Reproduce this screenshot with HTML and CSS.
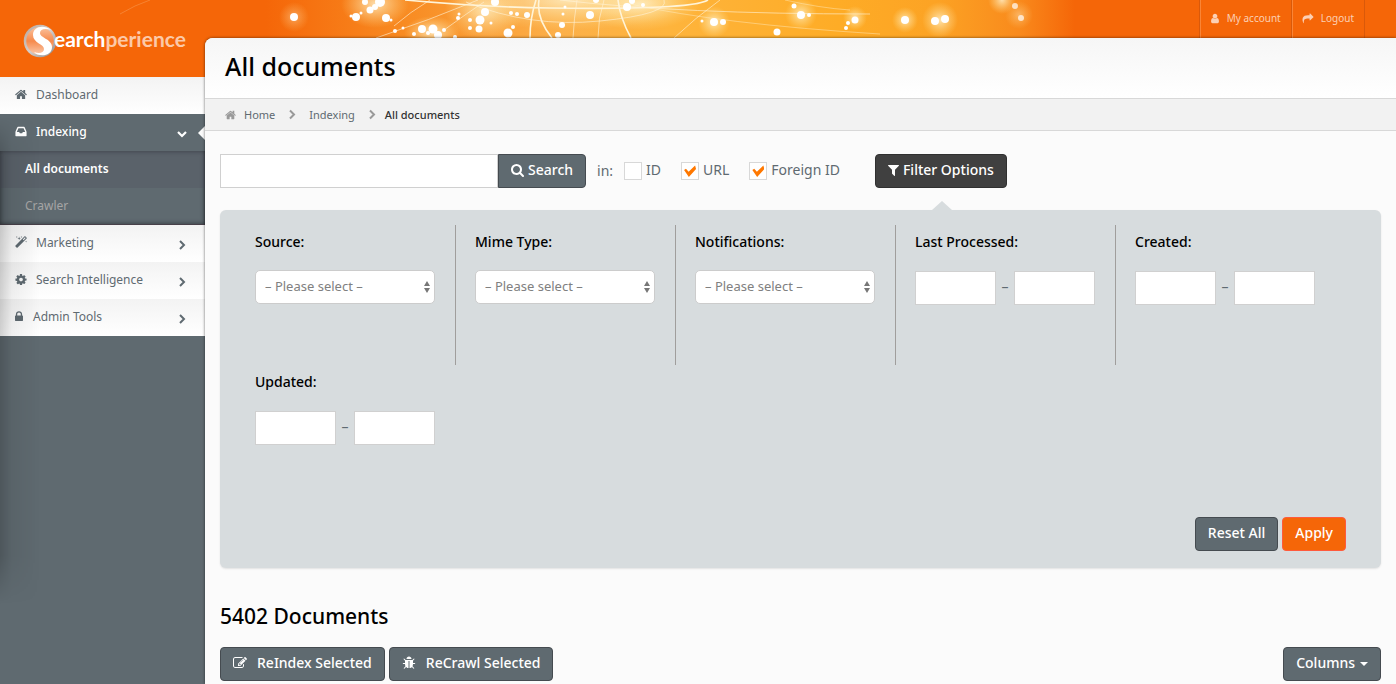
FILE: index.html
```html
<!DOCTYPE html>
<html lang="en">
<head>
<meta charset="utf-8">
<title>All documents</title>
<link rel="stylesheet" href="styles.css">
</head>
<body>
<svg width="0" height="0" class="sprite" aria-hidden="true">
  <symbol id="home" viewBox="0 0 1664 1792"><path d="M1408 992v480q0 26-19 45t-45 19H960v-384H704v384H320q-26 0-45-19t-19-45V992q0-1 .5-3t.5-3l575-474 575 474q1 2 1 6zm223-69l-62 74q-8 9-21 11h-3q-13 0-21-7L832 424 140 1001q-12 8-24 7-13-2-21-11l-62-74q-8-10-7-23.500T37 878l719-599q32-26 76-26t76 26l244 204V288q0-14 9-23t23-9h192q14 0 23 9t9 23v408l219 182q10 8 11 21.500t-7 23.500z"/></symbol>
  <symbol id="inbox" viewBox="0 0 1536 1792"><path d="M1023 960h316q-1-3-2.500-8.500t-2.500-7.500L1122 448H414L202 944q-1 3-2.500 8.500T197 960h316l95 192h320zm513 30v482q0 26-19 45t-45 19H64q-26 0-45-19t-19-45V990q0-62 25-123l238-552q10-25 36.500-42t52.500-17h832q26 0 52.500 17t36.500 42l238 552q25 61 25 123z"/></symbol>
  <symbol id="magic" viewBox="0 0 1664 1792"><path d="M1190 581l293-293-107-107-293 293zM1637 288q0 27-18 45L333 1619q-18 18-45 18t-45-18L45 1421q-18-18-18-45t18-45L1331 45q18-18 45-18t45 18l198 198q18 18 18 45zM286 98l98 30-98 30-30 98-30-98-98-30 98-30 30-98zM636 260l196 60-196 60-60 196-60-196-196-60 196-60 60-196zM1566 738l98 30-98 30-30 98-30-98-98-30 98-30 30-98zM926 98l98 30-98 30-30 98-30-98-98-30 98-30 30-98z"/></symbol>
  <symbol id="cog" viewBox="0 0 1536 1792"><path d="M1024 896q0-106-75-181t-181-75-181 75-75 181 75 181 181 75 181-75 75-181zm512-109v222q0 12-8 23t-20 13l-185 28q-19 54-39 91 35 50 107 138 10 12 10 25t-9 23q-27 37-99 108t-94 71q-12 0-26-9l-138-108q-44 23-91 38-16 136-29 186-7 28-36 28H657q-14 0-24.500-8.500T621 1658l-28-184q-49-16-90-37l-141 107q-10 9-25 9-14 0-25-11-126-114-165-168-7-10-7-23 0-12 8-23 15-21 51-66.500t54-70.500q-27-50-41-99L29 1064q-13-2-21-12.500T0 1028V806q0-12 8-23t19-13l186-28q14-46 39-92-40-57-107-138-10-12-10-24 0-10 9-23 26-36 98.500-107.500T337 286q13 0 26 10l138 107q44-23 91-38 16-136 29-186 7-28 36-28h222q14 0 24.500 8.500T915 180l28 184q49 16 90 37l142-107q9-9 24-9 13 0 25 10 129 119 165 170 7 8 7 22 0 12-8 23-15 21-51 66.500T1283 647q26 50 41 98l183 28q13 2 21 12.500t8 23.500z"/></symbol>
  <symbol id="lock" viewBox="0 0 1152 1792"><path d="M320 768h512V576q0-106-75-181t-181-75-181 75-75 181v192zm832 96v576q0 40-28 68t-68 28H96q-40 0-68-28t-28-68V864q0-40 28-68t68-28h32V576q0-184 132-316t316-132 316 132 132 316v192h32q40 0 68 28t28 68z"/></symbol>
  <symbol id="user" viewBox="0 0 1280 1792"><path d="M1280 1399q0 109-62.500 187t-150.500 78H213q-88 0-150.500-78T0 1399q0-85 8.500-160.500t31.500-152T98.500 955.500t94-89T327 832q131 128 313 128t313-128q76 0 134.500 34.500t94 89T1240 1086.500t31.500 152T1280 1399zM1024 512q0 159-112.500 271.500T640 896 368.500 783.500 256 512t112.500-271.500T640 128t271.500 112.500T1024 512z"/></symbol>
  <symbol id="share" viewBox="0 0 1792 1792"><path d="M1792 640q0 26-19 45l-512 512q-19 19-45 19t-45-19-19-45V896H928q-98 0-175.500 6t-154 21.500-133 42.500-105.500 69.500-80 101-48.500 138.500-17.500 181q0 55 5 123 0 6 2.500 23.500t2.500 26.500q0 15-8.500 25t-23.500 10q-16 0-28-17-7-9-13-22t-13.500-30-10.500-24Q0 1286 0 1120q0-199 53-333Q215 384 928 384h224V128q0-26 19-45t45-19 45 19l512 512q19 19 19 45z"/></symbol>
  <symbol id="search" viewBox="0 0 1664 1792"><path d="M1152 832q0-185-131.500-316.500T704 384 387.500 515.500 256 832t131.500 316.500T704 1280t316.500-131.500T1152 832zm512 832q0 52-38 90t-90 38q-54 0-90-38l-343-342q-179 124-399 124-143 0-273.500-55.500t-225-150-150-225T0 832t55.500-273.500 150-225 225-150T704 128t273.500 55.500 225 150 150 225T1408 832q0 220-124 399l343 343q37 37 37 90z"/></symbol>
  <symbol id="filter" viewBox="0 0 1408 1792"><path d="M1403 295q17 41-14 70L896 858v742q0 42-39 59-13 5-25 5-27 0-45-19l-256-256q-19-19-19-45V858L19 365q-31-29-14-70 17-39 59-39h1280q42 0 59 39z"/></symbol>
  <symbol id="edit" viewBox="0 0 1792 1792"><path d="M888 1184l116-116-152-152-116 116v56h96v96h56zm440-720q-16-16-33 1L945 815q-17 17-1 33t33-1l350-350q17-17 1-33zm80 594v190q0 119-84.500 203.500T1120 1536H288q-119 0-203.500-84.500T0 1248V416q0-119 84.500-203.500T288 128h832q63 0 117 25 15 7 18 23 3 17-9 29l-49 49q-14 14-32 8-23-6-45-6H288q-66 0-113 47t-47 113v832q0 66 47 113t113 47h832q66 0 113-47t47-113v-126q0-13 9-22l64-64q15-15 35-7t20 29zm-96-738l288 288-672 672H640V992zm444 132l-92 92-288-288 92-92q28-28 68-28t68 28l152 152q28 28 28 68t-28 68z"/></symbol>
  <symbol id="bug" viewBox="0 0 1792 1792"><path d="M1696 960q0 26-19 45t-45 19h-224q0 171-67 290l208 209q19 19 19 45t-19 45q-18 19-45 19t-45-19l-198-197q-5 5-15 13t-42 28.500-65 36.500-82 29-97 13V640H832v896q-51 0-101.500-13.500t-87-33-66-39-43.500-32.500l-15-14-183 207q-20 21-48 21-24 0-43-16-19-18-20.500-44.500t15.500-46.500l202-227q-58-114-58-274H160q-26 0-45-19t-19-45 19-45 45-19h224V602L211 429q-19-19-19-45t19-45 45-19 45 19l173 173h844l173-173q19-19 45-19t45 19 19 45-19 45l-173 173v294h224q26 0 45 19t19 45zm-480-576H576q0-133 93.500-226.500T896 64t226.500 93.500T1216 384z"/></symbol>
  <symbol id="right" viewBox="0 0 8 10"><path d="M2 1l4 4-4 4" fill="none" stroke="currentColor" stroke-width="2"/></symbol>
  <symbol id="down" viewBox="0 0 10 8"><path d="M1 2l4 4 4-4" fill="none" stroke="currentColor" stroke-width="2.200"/></symbol>
  <symbol id="updown" viewBox="0 0 6 12"><path d="M0 5l3-5 3 5zM0 7l3 5 3-5z"/></symbol>
</svg>

<div class="page">
  <svg class="sparkles" viewBox="0 0 1396 38" preserveAspectRatio="xMidYMin slice" aria-hidden="true">
    <defs>
      <linearGradient id="warm"><stop offset=".19" stop-color="#f56608"/><stop offset=".29" stop-color="#f88b22"/><stop offset=".4" stop-color="#fcb04a"/><stop offset=".48" stop-color="#feb43c"/><stop offset=".6" stop-color="#feac26"/><stop offset=".67" stop-color="#fca324"/><stop offset=".73" stop-color="#f98a1c"/><stop offset=".77" stop-color="#f56608"/></linearGradient>
      <radialGradient id="glow"><stop offset="0" stop-color="#fff3cf" stop-opacity=".8"/><stop offset="1" stop-color="#ffe090" stop-opacity="0"/></radialGradient>
    </defs>
    <rect width="1396" height="38" fill="url(#warm)"/>
    <g fill="url(#glow)">
      <ellipse cx="375" cy="4" rx="34" ry="24"/><ellipse cx="432" cy="32" rx="28" ry="16"/><ellipse cx="485" cy="10" rx="40" ry="30"/><ellipse cx="570" cy="0" rx="120" ry="30"/><ellipse cx="640" cy="4" rx="60" ry="26"/>
      <circle cx="294" cy="17" r="15" opacity=".5"/><circle cx="714" cy="22" r="16"/><circle cx="801" cy="14" r="16"/><circle cx="905" cy="20" r="13"/><circle cx="940" cy="20" r="18"/><circle cx="855" cy="18" r="12"/><circle cx="1002" cy="0" r="14"/><circle cx="1019" cy="15" r="14" opacity=".5"/>
    </g>
    <g fill="none" stroke="#fff4d8">
      <g stroke-width="1.600"><path d="M405 0Q480 7 550 8T660 7Q700 5 708 0"/><path d="M536 0Q530 18 530 38"/><path d="M539 0Q536 18 552 38"/><path d="M618 0Q620 18 631 38"/></g>
      <g stroke-opacity=".6"><path d="M376 38Q430 20 478 0"/><path d="M394 26Q410 12 430 0"/><path d="M444 30Q466 14 484 2"/><path d="M466 2Q530 28 600 21T664 0"/><path d="M577 0Q574 18 573 38"/><path d="M604 0Q598 18 598 38"/><path d="M674 38Q695 18 720 0"/><path d="M560 0Q680 14 870 14"/><path d="M630 4Q720 24 880 34" stroke-opacity=".4"/><path d="M785 0Q820 8 850 10" stroke-opacity=".4"/><path d="M120 14Q135 5 150 0" stroke-opacity=".2"/></g>
    </g>
    <g fill="#fff">
      <circle cx="294" cy="17" r="4"/><circle cx="356" cy="17" r="4"/><circle cx="351" cy="16" r="1.500"/><circle cx="361" cy="13" r="1.500"/><circle cx="365" cy="2" r="3"/><circle cx="370" cy="10" r="3.500"/><circle cx="375" cy="7" r="3"/><circle cx="380" cy="2" r="5"/><circle cx="386" cy="18" r="4"/><circle cx="391" cy="20" r="1.500"/><circle cx="395" cy="31" r="2"/><circle cx="403" cy="28" r="1.500"/><circle cx="414" cy="34" r="2"/><circle cx="422" cy="29" r="4"/><circle cx="433" cy="29" r="4.500"/><circle cx="428" cy="33" r="2"/><circle cx="438" cy="35" r="4"/><circle cx="444" cy="30" r="2"/><circle cx="455" cy="37" r="2"/><circle cx="458" cy="18" r="2"/><circle cx="459" cy="14" r="1.500"/><circle cx="470" cy="28" r="2"/><circle cx="470" cy="20" r="2"/><circle cx="479" cy="29" r="3.500"/><circle cx="480" cy="20" r="4.500"/><circle cx="485" cy="12" r="4"/><circle cx="495" cy="2" r="4"/><circle cx="491" cy="23" r="1.500"/><circle cx="508" cy="33" r="4.500"/><circle cx="513" cy="27" r="2"/><circle cx="511" cy="13" r="2"/><circle cx="517" cy="14" r="2"/><circle cx="527" cy="15" r="3"/><circle cx="558" cy="35" r="3"/><circle cx="562" cy="25" r="3"/><circle cx="563" cy="14" r="1.500"/><circle cx="565" cy="7" r="1.500"/><circle cx="590" cy="15" r="4"/><circle cx="596" cy="0" r="3"/><circle cx="627" cy="7" r="4"/><circle cx="632" cy="1" r="3"/><circle cx="643" cy="5" r="2"/><circle cx="702" cy="21" r="1.500"/><circle cx="714" cy="22" r="4"/><circle cx="723" cy="22" r="3"/><circle cx="777" cy="32" r="3.500"/><circle cx="794" cy="6" r="2.500"/><circle cx="801" cy="15" r="4"/><circle cx="809" cy="15" r="2"/><circle cx="846" cy="28" r="2"/><circle cx="848" cy="23" r="2"/><circle cx="855" cy="20" r="3.500"/><circle cx="905" cy="20" r="4"/><circle cx="935" cy="21" r="4"/><circle cx="945" cy="19" r="4"/><circle cx="1015" cy="6" r="3" opacity=".7"/><circle cx="1021" cy="18" r="3" opacity=".7"/>
    </g>
  </svg>

  <div class="side">
    <a class="logo" href="#" aria-label="Searchperience">
      <svg viewBox="0 0 34 34" aria-hidden="true">
        <defs><linearGradient id="lens" x2="0" y2="1"><stop offset="0" stop-color="#fbc7a6"/><stop offset=".5" stop-color="#f68a4c"/><stop offset="1" stop-color="#fbd0b4"/></linearGradient>
        <linearGradient id="rim" x2="1" y2="1"><stop offset="0" stop-color="#b9a79d"/><stop offset=".5" stop-color="#d5cfcb"/><stop offset="1" stop-color="#8f8a88"/></linearGradient></defs>
        <circle cx="17" cy="17" r="15" fill="url(#lens)" stroke="url(#rim)" stroke-width="2.500"/>
        <path d="M28 6C20 0 10 3 10 11c0 8 11 9 11 14 0 4-5 5-10 3 4 5 18 5 18-5 0-8-12-9-12-14 0-4 5-5 11-3z" fill="#fff"/>
      </svg>
      <span class="logo-text">earch<span class="logo-soft">perience</span></span>
    </a>
    <nav class="nav">
      <a class="item" href="#"><svg class="ic"><use href="#home"/></svg>Dashboard</a>
      <a class="item open" href="#"><svg class="ic"><use href="#inbox"/></svg>Indexing<svg class="chev"><use href="#down"/></svg></a>
      <div class="sub">
        <a class="subitem current" href="#">All documents</a>
        <a class="subitem" href="#">Crawler</a>
      </div>
      <a class="item" href="#"><svg class="ic"><use href="#magic"/></svg>Marketing<svg class="chev"><use href="#right"/></svg></a>
      <a class="item" href="#"><svg class="ic"><use href="#cog"/></svg>Search Intelligence<svg class="chev"><use href="#right"/></svg></a>
      <a class="item" href="#"><svg class="ic narrow"><use href="#lock"/></svg>Admin Tools<svg class="chev"><use href="#right"/></svg></a>
    </nav>
  </div>

  <div class="body">
    <div class="topbar">
      <a class="top-link" href="#"><svg class="user"><use href="#user"/></svg>My account</a>
      <a class="top-link" href="#"><svg><use href="#share"/></svg>Logout</a>
    </div>
    <main class="main">
      <h1 class="title">All documents</h1>
      <nav class="crumbs" aria-label="Breadcrumb">
        <a class="crumb" href="#"><svg class="crumb-home"><use href="#home"/></svg>Home</a>
        <svg class="sep"><use href="#right"/></svg>
        <a class="crumb" href="#">Indexing</a>
        <svg class="sep last"><use href="#right"/></svg>
        <span class="here">All documents</span>
      </nav>
      <div class="content">
        <form class="search">
          <input class="query" type="text" aria-label="Search documents">
          <button class="btn joined" type="button"><svg class="glyph"><use href="#search"/></svg>Search</button>
          <span class="in">in:</span>
          <label class="check"><input type="checkbox">ID</label>
          <label class="check"><input type="checkbox" checked>URL</label>
          <label class="check"><input type="checkbox" checked>Foreign ID</label>
          <button class="btn dark" type="button"><svg class="glyph funnel"><use href="#filter"/></svg>Filter Options</button>
        </form>
        <form class="panel">
          <div class="filters">
            <div class="cell"><label class="name" for="source">Source:</label><div class="pick"><select id="source"><option>– Please select –</option></select><svg><use href="#updown"/></svg></div></div>
            <div class="cell"><label class="name" for="mime">Mime Type:</label><div class="pick"><select id="mime"><option>– Please select –</option></select><svg><use href="#updown"/></svg></div></div>
            <div class="cell"><label class="name" for="notes">Notifications:</label><div class="pick"><select id="notes"><option>– Please select –</option></select><svg><use href="#updown"/></svg></div></div>
            <div class="cell"><label class="name" for="processed">Last Processed:</label><div class="range"><input id="processed" type="text"><span class="dash">–</span><input type="text" aria-label="Last processed until"></div></div>
            <div class="cell plain"><label class="name" for="created">Created:</label><div class="range"><input id="created" type="text"><span class="dash">–</span><input type="text" aria-label="Created until"></div></div>
            <div class="cell plain"><label class="name" for="updated">Updated:</label><div class="range"><input id="updated" type="text"><span class="dash">–</span><input type="text" aria-label="Updated until"></div></div>
          </div>
          <div class="actions">
            <button class="btn" type="reset">Reset All</button>
            <button class="btn orange" type="button">Apply</button>
          </div>
        </form>
        <h2 class="count">5402 Documents</h2>
        <div class="tools">
          <button class="btn" type="button"><svg class="glyph wide"><use href="#edit"/></svg>ReIndex Selected</button>
          <button class="btn" type="button"><svg class="glyph wide"><use href="#bug"/></svg>ReCrawl Selected</button>
          <button class="btn columns" type="button">Columns<span class="caret"></span></button>
        </div>
      </div>
    </main>
  </div>
</div>
</body>
</html>
```
FILE: styles.css
```css
* { box-sizing: border-box; }
body {
  margin: 0;
  font-family: "Noto Sans", "Open Sans", sans-serif;
  font-size: 14px;
  color: #5f6a71;
}
a { color: inherit; text-decoration: none; }
svg { fill: currentColor; flex: none; }
button, input, select { font: inherit; margin: 0; }
.sprite { position: absolute; }

.page {
  position: relative;
  display: grid;
  grid-template-columns: 205px 1fr;
  min-height: 100vh;
  background: #f56608;
}
.sparkles { position: absolute; top: 0; left: 0; width: 100%; height: 38px; }

.side { position: relative; display: flex; flex-direction: column; }
.logo { display: flex; align-items: center; height: 77px; padding: 4px 0 0 23px; }
.logo svg { width: 34px; height: 34px; }
.logo-text {
  font-family: Lato, sans-serif;
  font-weight: 700;
  font-size: 21px;
  line-height: 28px;
  color: #fff;
  margin: -4px 0 0 -3px;
}
.logo-soft { color: #fcc9a8; }
.nav {
  position: relative;
  flex: 1;
  background: #5f6a70;
  font-size: 12px;
}
.nav::after {
  content: "";
  position: absolute;
  left: 0;
  top: 40px;
  bottom: 80px;
  width: 40px;
  background: linear-gradient(90deg, rgba(0, 0, 0, .18), rgba(0, 0, 0, .06) 30%, transparent);
  mask-image: linear-gradient(transparent, #000 40px, #000 90%, transparent);
  pointer-events: none;
}
.item {
  position: relative;
  display: flex;
  align-items: center;
  height: 37px;
  padding: 0 18px 2px 15px;
  background: linear-gradient(#f3f3f3, #fff);
}
.ic { width: 12px; height: 13px; margin-right: 9px; }
.ic.narrow { width: 8px; margin-right: 10px; }
.chev { width: 10px; height: 10px; margin: 4px 0 0 auto; }
.open { background: #5f6a70; color: #fff; font-weight: 500; }
.open::after {
  content: "";
  position: absolute;
  right: 0;
  top: 12px;
  border: solid transparent;
  border-width: 7px 7px 7px 0;
  border-right-color: #fbfbfb;
}
.sub { box-shadow: inset 0 0 5px #30353a; background: #5f6a70; border-bottom: 1px solid #474049; }
.subitem { display: flex; align-items: center; height: 37px; padding: 0 25px 2px; color: #a5a5a5; }
.subitem.current { color: #fff; font-weight: 600; background: rgba(80, 80, 92, .3); }
.sub .subitem:last-child { height: 36px; }

.body { position: relative; display: flex; flex-direction: column; min-width: 0; }
.topbar { display: flex; justify-content: flex-end; height: 38px; padding-right: 31px; font-size: 10px; color: #fcd0b5; }
.top-link {
  display: flex;
  align-items: center;
  padding: 0 10px 2px;
  border-left: 1px solid #d9590a;
  box-shadow: inset 1px 0 #fa8536;
}
.top-link:last-child { border-right: 1px solid #d9590a; }
.top-link svg { width: 12px; height: 11px; margin-right: 7px; }
.top-link .user { width: 10px; }

.main {
  flex: 1;
  background: #fbfbfb;
  border-top-left-radius: 8px;
  box-shadow: 0 0 3px rgba(0, 0, 0, .6);
}
.title {
  margin: 0;
  padding: 8px 20px 12px;
  font-size: 25px;
  line-height: 40px;
  font-weight: 500;
  color: #000;
  background: linear-gradient(#f6f6f6, #fff);
  border-top-left-radius: 8px;
  border-bottom: 1px solid #d8d8d8;
}
.crumbs {
  display: flex;
  align-items: center;
  height: 32px;
  padding: 0 20px;
  font-size: 11px;
  background: #f2f2f2;
  border-bottom: 1px solid #d8d8d8;
}
.crumb { display: flex; align-items: center; }
.crumb-home { width: 11px; height: 12px; margin-right: 8px; color: #999; }
.sep { width: 8px; height: 11px; margin: 0 13px; color: #999; }
.sep.last { margin-right: 9px; }
.here { color: #333; font-weight: 500; }

.content { padding: 23px 15px 3px; }
.search { display: flex; align-items: center; font-size: 14px; }
.query, .range input { height: 34px; background: #fff; border: 1px solid #d0d0d0; outline: none; }
.query { width: 278px; }
.btn {
  display: flex;
  align-items: center;
  height: 34px;
  padding: 0 12px 3px;
  font-size: 14px;
  font-weight: 500;
  color: #fff;
  background: #5f6a70;
  border: 1px solid #454b50;
  border-radius: 4px;
}
.joined { border-radius: 0 4px 4px 0; }
.glyph { width: 13px; height: 14px; margin-right: 4px; }
.funnel { width: 11px; }
.wide { width: 14px; margin-right: 10px; }
.dark { background: #404040; border-color: #303030; }
.orange { background: #f56608; border-color: #ff5a3c; }
.in { margin: 0 11px 2px; }
.check { display: flex; align-items: center; gap: 4px; margin-right: 20px; line-height: 18px; padding-bottom: 2px; }
.check + .dark { margin-left: 15px; }
.check input {
  appearance: none;
  display: grid;
  place-items: center;
  width: 18px;
  height: 18px;
  margin-top: 2px;
  background: #fff;
  border: 1px solid #d8d8d8;
}
.check input:checked::after {
  content: "";
  width: 12px;
  height: 12px;
  background: #ff7800;
  clip-path: polygon(0 42%, 16% 32%, 38% 56%, 92% 4%, 100% 34%, 40% 100%);
}

.panel {
  position: relative;
  margin-top: 22px;
  padding: 15px 15px 17px;
  background: #d7dcde;
  border-radius: 6px;
  box-shadow: 0 1px 2px rgba(0, 0, 0, .1);
}
.panel::before {
  content: "";
  position: absolute;
  left: 712px;
  top: -9px;
  border: solid transparent;
  border-width: 0 10px 9px;
  border-bottom-color: #d7dcde;
}
.filters { display: flex; flex-wrap: wrap; }
.cell { width: 220px; height: 140px; padding: 7px 20px 0; box-shadow: 1px 0 #a09e9c; }
.plain { box-shadow: none; }
.name { display: block; line-height: 20px; font-weight: 500; color: #000; }
.pick { position: relative; margin-top: 18px; }
.pick select {
  appearance: none;
  display: block;
  width: 180px;
  height: 34px;
  padding: 0 9px 2px;
  font-size: 13px;
  color: #808080;
  background: #fff;
  border: 1px solid #ccc;
  border-radius: 5px;
}
.pick svg { position: absolute; right: 5px; top: 11px; width: 6px; height: 12px; color: #777; pointer-events: none; }
.range { display: flex; justify-content: space-between; align-items: center; margin-top: 19px; }
.range input { width: 81px; }
.dash { padding-bottom: 3px; }
.actions { display: flex; justify-content: flex-end; gap: 4px; padding: 12px 20px 0 0; }

.count { margin: 32px 0 15px; font-size: 21px; line-height: 32px; font-weight: 500; color: #000; }
.tools { display: flex; gap: 4px; }
.columns { margin-left: auto; }
.caret { margin: 3px 0 0 5px; border: solid transparent; border-width: 4px 4px 0; border-top-color: #fff; }
```
